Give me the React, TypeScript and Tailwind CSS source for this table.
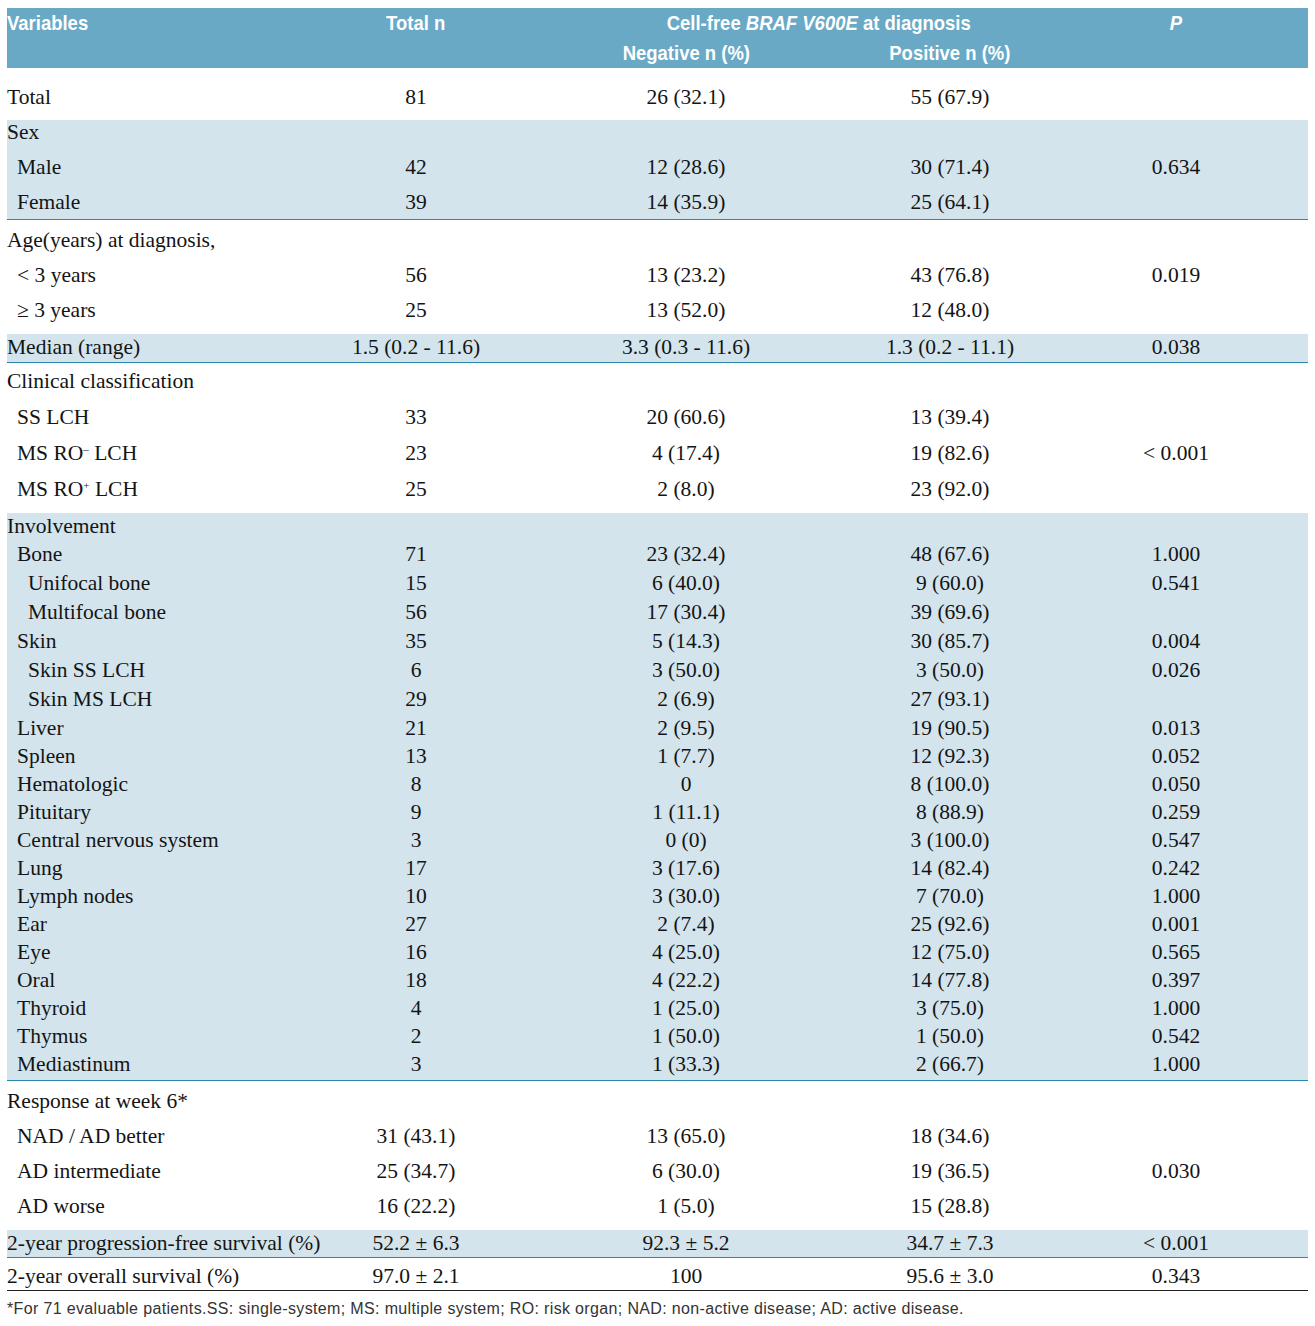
import React from "react";

type RowProps = {
  label: React.ReactNode;
  indent?: 0 | 1 | 2;
  vals?: React.ReactNode[];
  h: string;
};

const GRID = "grid grid-cols-[293px_232px_308px_220px_232px_16px]";

function Row({ label, indent = 0, vals = [], h }: RowProps) {
  const ind = indent === 0 ? "pl-0" : indent === 1 ? "pl-[10px]" : "pl-[21px]";
  return (
    <div className={`${GRID} ${h} items-center`}>
      <div className={`${ind} whitespace-nowrap`}>{label}</div>
      {[0, 1, 2, 3].map((i) => (
        <div key={i} className="text-center whitespace-nowrap">
          {vals[i] ?? ""}
        </div>
      ))}
      <div />
    </div>
  );
}

const Sup = ({ c }: { c: string }) => (
  <span className="inline-block text-[11px] relative -top-[7px] align-baseline">{c}</span>
);

const H = ({ children, left }: { children: React.ReactNode; left?: boolean }) => (
  <span className={`inline-block whitespace-nowrap scale-x-[0.88] ${left ? "origin-left" : "origin-center"}`}>
    {children}
  </span>
);

export default function App() {
  const inv: [string, 1 | 2, string, string, string, string][] = [
    ["Bone", 1, "71", "23 (32.4)", "48 (67.6)", "1.000"],
    ["Unifocal bone", 2, "15", "6 (40.0)", "9 (60.0)", "0.541"],
    ["Multifocal bone", 2, "56", "17 (30.4)", "39 (69.6)", ""],
    ["Skin", 1, "35", "5 (14.3)", "30 (85.7)", "0.004"],
    ["Skin SS LCH", 2, "6", "3 (50.0)", "3 (50.0)", "0.026"],
    ["Skin MS LCH", 2, "29", "2 (6.9)", "27 (93.1)", ""],
  ];
  const inv2: [string, string, string, string, string][] = [
    ["Liver", "21", "2 (9.5)", "19 (90.5)", "0.013"],
    ["Spleen", "13", "1 (7.7)", "12 (92.3)", "0.052"],
    ["Hematologic", "8", "0", "8 (100.0)", "0.050"],
    ["Pituitary", "9", "1 (11.1)", "8 (88.9)", "0.259"],
    ["Central nervous system", "3", "0 (0)", "3 (100.0)", "0.547"],
    ["Lung", "17", "3 (17.6)", "14 (82.4)", "0.242"],
    ["Lymph nodes", "10", "3 (30.0)", "7 (70.0)", "1.000"],
    ["Ear", "27", "2 (7.4)", "25 (92.6)", "0.001"],
    ["Eye", "16", "4 (25.0)", "12 (75.0)", "0.565"],
    ["Oral", "18", "4 (22.2)", "14 (77.8)", "0.397"],
    ["Thyroid", "4", "1 (25.0)", "3 (75.0)", "1.000"],
    ["Thymus", "2", "1 (50.0)", "1 (50.0)", "0.542"],
    ["Mediastinum", "3", "1 (33.3)", "2 (66.7)", "1.000"],
  ];

  return (
    <div className="min-h-[1326px] bg-white pt-[8px] pl-[7px]">
      <div
        className="w-[1301px] text-[#141414] text-[21.5px] leading-none"
        style={{ fontFamily: '"Liberation Serif", "Times New Roman", serif' }}
      >
        {/* Header */}
        <div
          className={`${GRID} grid-rows-[29px_31px] bg-[#69a9c6] text-white font-bold text-[21px] leading-none`}
          style={{ fontFamily: '"Liberation Sans Narrow", "Liberation Sans", Arial, sans-serif' }}
        >
          <div className="row-start-1 col-start-1 flex items-center">
            <H left>Variables</H>
          </div>
          <div className="row-start-1 col-start-2 flex items-center justify-center">
            <H>Total n</H>
          </div>
          <div className="row-start-1 col-start-3 col-span-2 flex items-center justify-center pl-[46px]">
            <H>
              Cell-free <i>BRAF V600E</i> at diagnosis
            </H>
          </div>
          <div className="row-start-1 col-start-5 flex items-center justify-center italic">
            <H>P</H>
          </div>
          <div className="row-start-2 col-start-3 flex items-center justify-center">
            <H>Negative n (%)</H>
          </div>
          <div className="row-start-2 col-start-4 flex items-center justify-center">
            <H>Positive n (%)</H>
          </div>
        </div>

        {/* Total */}
        <div className="pt-[12px] pb-[5px]">
          <Row label="Total" h="h-[35px]" vals={["81", "26 (32.1)", "55 (67.9)"]} />
        </div>

        {/* Sex */}
        <div className="bg-[#d3e4ed] border-b border-[#2b88ad]">
          <div className="h-[30px] flex items-start leading-[24px]">Sex</div>
          <Row label="Male" indent={1} h="h-[36px]" vals={["42", "12 (28.6)", "30 (71.4)", "0.634"]} />
          <Row label="Female" indent={1} h="h-[33px]" vals={["39", "14 (35.9)", "25 (64.1)"]} />
        </div>

        {/* Age */}
        <div className="pt-[3px] pb-[6px]">
          <Row label="Age(years) at diagnosis," h="h-[35px]" />
          <Row label="< 3 years" indent={1} h="h-[35px]" vals={["56", "13 (23.2)", "43 (76.8)", "0.019"]} />
          <Row label="≥ 3 years" indent={1} h="h-[35px]" vals={["25", "13 (52.0)", "12 (48.0)"]} />
        </div>
        <div className="bg-[#d3e4ed] border-b border-[#2b88ad]">
          <Row
            label="Median (range)"
            h="h-[28px]"
            vals={["1.5 (0.2 - 11.6)", "3.3 (0.3 - 11.6)", "1.3 (0.2 - 11.1)", "0.038"]}
          />
        </div>

        {/* Clinical */}
        <div className="pt-[1px] pb-[5px]">
          <Row label="Clinical classification" h="h-[36px]" />
          <Row label="SS LCH" indent={1} h="h-[36px]" vals={["33", "20 (60.6)", "13 (39.4)"]} />
          <Row
            label={
              <>
                MS RO<Sup c="–" /> LCH
              </>
            }
            indent={1}
            h="h-[36px]"
            vals={["23", "4 (17.4)", "19 (82.6)", "< 0.001"]}
          />
          <Row
            label={
              <>
                MS RO<Sup c="+" /> LCH
              </>
            }
            indent={1}
            h="h-[36px]"
            vals={["25", "2 (8.0)", "23 (92.0)"]}
          />
        </div>

        {/* Involvement */}
        <div className="bg-[#d3e4ed] border-b border-[#2b88ad] pb-[1px]">
          <Row label="Involvement" h="h-[27px]" />
          {inv.map((r) => (
            <Row key={r[0]} label={r[0]} indent={r[1]} h="h-[29px]" vals={[r[2], r[3], r[4], r[5]]} />
          ))}
          <div className="h-[1px]" />
          {inv2.map((r) => (
            <Row key={r[0]} label={r[0]} indent={1} h="h-[28px]" vals={[r[1], r[2], r[3], r[4]]} />
          ))}
        </div>

        {/* Response */}
        <div className="pt-[3px] pb-[6px]">
          <Row label="Response at week 6*" h="h-[35px]" />
          <Row label="NAD / AD better" indent={1} h="h-[35px]" vals={["31 (43.1)", "13 (65.0)", "18 (34.6)"]} />
          <Row
            label="AD intermediate"
            indent={1}
            h="h-[35px]"
            vals={["25 (34.7)", "6 (30.0)", "19 (36.5)", "0.030"]}
          />
          <Row label="AD worse" indent={1} h="h-[35px]" vals={["16 (22.2)", "1 (5.0)", "15 (28.8)"]} />
        </div>

        <div className="bg-[#d3e4ed] border-b border-[#2b88ad]">
          <Row
            label="2-year progression-free survival (%)"
            h="h-[27px]"
            vals={["52.2 ± 6.3", "92.3 ± 5.2", "34.7 ± 7.3", "< 0.001"]}
          />
        </div>
        <div className="pt-[5px] border-b border-[#222]">
          <Row
            label="2-year overall survival (%)"
            h="h-[27px]"
            vals={["97.0 ± 2.1", "100", "95.6 ± 3.0", "0.343"]}
          />
        </div>

        <div
          className="h-[36px] flex items-center text-[16px] tracking-[0.35px] text-[#333] whitespace-nowrap"
          style={{ fontFamily: '"Liberation Sans", Arial, sans-serif' }}
        >
          *For 71 evaluable patients.SS: single-system; MS: multiple system; RO: risk organ; NAD: non-active disease; AD: active disease.
        </div>
      </div>
    </div>
  );
}
